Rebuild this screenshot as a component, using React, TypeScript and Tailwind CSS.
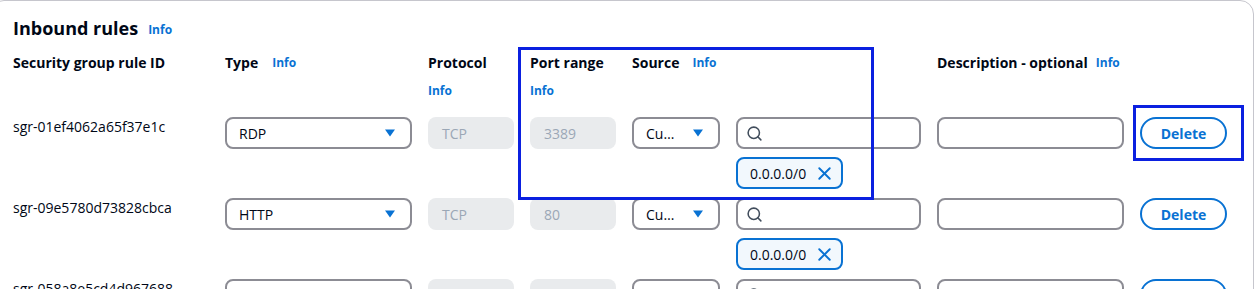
import { Search, X } from "lucide-react";

const cols =
  "grid grid-cols-[196px_187px_86px_86px_88px_185px_187px_87px] gap-x-[16px]";

function Info() {
  return <span className="text-[12px] font-bold text-[#0972d3] leading-[20px]">Info</span>;
}

function Caret() {
  return (
    <svg width="12" height="8" viewBox="0 0 12 8" className="shrink-0">
      <path d="M1 0.5h10L6 7.5z" fill="#0972d3" />
    </svg>
  );
}

function SelectBox({ value }: { value: string }) {
  return (
    <div className="h-[32px] flex items-center justify-between gap-[14px] border-2 border-[#8c8c94] rounded-[8px] pl-[12px] pr-[14px] text-[14px] text-[#000716]">
      <span className="truncate">{value}</span>
      <Caret />
    </div>
  );
}

function Disabled({ value }: { value: string }) {
  return (
    <div className="h-[32px] flex items-center bg-[#e9ebed] rounded-[8px] px-[14px] text-[14px] text-[#9ba7b6]">
      {value}
    </div>
  );
}

type Rule = { id: string; type: string; proto: string; port: string };

const rules: Rule[] = [
  { id: "sgr-01ef4062a65f37e1c", type: "RDP", proto: "TCP", port: "3389" },
  { id: "sgr-09e5780d73828cbca", type: "HTTP", proto: "TCP", port: "80" },
  { id: "sgr-058a8e5cd4d967688", type: "", proto: "", port: "" },
];

function RuleRow({ r }: { r: Rule }) {
  return (
    <div className={cols}>
      <div className="text-[14px] leading-[20px] text-[#000716]">{r.id}</div>
      <SelectBox value={r.type} />
      <Disabled value={r.proto} />
      <Disabled value={r.port} />
      <SelectBox value="Custom" />
      <div className="flex flex-col gap-[8px] items-start">
        <div className="w-full h-[32px] flex items-center border-2 border-[#8c8c94] rounded-[8px] pl-[8px]">
          <Search size={17} strokeWidth={2.2} className="text-[#414d5c]" />
        </div>
        <div className="h-[32px] flex items-center gap-[8px] border-2 border-[#0972d3] bg-[#f2f8fd] rounded-[8px] pl-[12px] pr-[6px] text-[14px] text-[#000716]">
          0.0.0.0/0
          <X size={21} strokeWidth={2.2} className="text-[#0972d3]" />
        </div>
      </div>
      <div className="h-[32px] border-2 border-[#8c8c94] rounded-[8px]" />
      <div>
        <button className="w-full h-[32px] border-2 border-[#0972d3] rounded-full text-[14px] font-bold text-[#0972d3]">
          Delete
        </button>
      </div>
    </div>
  );
}

export default function App() {
  return (
    <div
      className="relative w-[1259px] h-[289px] overflow-hidden bg-white"
      style={{ fontFamily: '"Open Sans", "Noto Sans", sans-serif' }}
    >
      <div className="ml-[-10px] w-[1264px] h-[320px] border border-[#c6c6cd] rounded-t-[14px] pl-[22px] pt-[14px]">
        <div className="flex items-center gap-[10px]">
          <h2 className="text-[18px] font-bold leading-[26px] text-[#000716]">Inbound rules</h2>
          <span className="text-[12px] font-bold text-[#0972d3] mt-[3px]">Info</span>
        </div>

        <div className={`${cols} mt-[12px] text-[14px] font-bold text-[#000716] leading-[20px]`}>
          <div>Security group rule ID</div>
          <div className="flex gap-[14px]">
            <span>Type</span>
            <Info />
          </div>
          <div className="flex flex-col gap-[8px]">
            <span>Protocol</span>
            <Info />
          </div>
          <div className="flex flex-col gap-[8px]">
            <span>Port range</span>
            <Info />
          </div>
          <div className="col-span-2 flex gap-[13px]">
            <span>Source</span>
            <Info />
          </div>
          <div className="flex gap-[8px]">
            <span className="whitespace-nowrap">Description - optional</span>
            <Info />
          </div>
          <div />
        </div>

        <div className="mt-[16px] flex flex-col gap-[9px]">
          {rules.map((r) => (
            <RuleRow key={r.id} r={r} />
          ))}
        </div>
      </div>

      <div className="absolute left-[518px] top-[47px] w-[356px] h-[153px] border-[3px] border-[#0b20e0]" />
      <div className="absolute left-[1133px] top-[105px] w-[111px] h-[56px] border-[3px] border-[#0b20e0]" />
    </div>
  );
}
